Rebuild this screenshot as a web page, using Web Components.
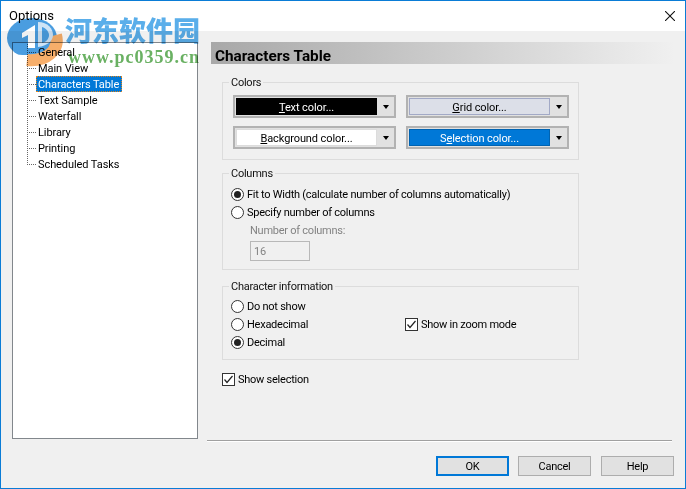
<!DOCTYPE html>
<html>
<head>
<meta charset="utf-8">
<title>Options</title>
<style>
  html, body { margin: 0; padding: 0; background: #f0f0f0; }
  body { width: 686px; height: 489px; overflow: hidden; font: 11px/16px Roboto, "Liberation Sans", sans-serif; letter-spacing: -.25px; color: #000; }
</style>
</head>
<body>
<options-window heading="Options">
  <tree-view slot="tree">
    <tree-item>General</tree-item>
    <tree-item>Main View</tree-item>
    <tree-item selected>Characters Table</tree-item>
    <tree-item>Text Sample</tree-item>
    <tree-item>Waterfall</tree-item>
    <tree-item>Library</tree-item>
    <tree-item>Printing</tree-item>
    <tree-item last>Scheduled Tasks</tree-item>
  </tree-view>

  <page-header slot="page">Characters Table</page-header>

  <group-box slot="page" label="Colors" class="colors" style="--top:12px;--bottom:10px;--gap-top:18px">
    <div style="display:grid;grid-template-columns:163px 163px;gap:8px 10px">
      <color-button bg="#000" fg="#fff" edge="#000"><u>T</u>ext color...</color-button>
      <color-button bg="#dcdfe8" fg="#000" edge="#a2a9c6"><u>G</u>rid color...</color-button>
      <color-button bg="#fff" fg="#000" edge="#dcdcdc"><u>B</u>ackground color...</color-button>
      <color-button bg="#0078d7" fg="#fff" edge="#0063b1">S<u>e</u>lection color...</color-button>
    </div>
  </group-box>

  <group-box slot="page" label="Columns" style="--top:11px;--bottom:8px;--gap-top:13px">
    <radio-option checked>Fit to Width (calculate number of columns automatically)</radio-option>
    <radio-option>Specify number of columns</radio-option>
    <number-field label="Number of columns:" value="16"></number-field>
  </group-box>

  <group-box slot="page" label="Character information" style="--top:10px;--bottom:8px;--gap-top:16px">
    <div style="display:grid;grid-template-columns:174px 1fr">
      <radio-option>Do not show</radio-option><span></span>
      <radio-option>Hexadecimal</radio-option><check-option>Show in zoom mode</check-option>
      <radio-option checked>Decimal</radio-option><span></span>
    </div>
  </group-box>

  <check-option slot="page" style="margin-top:10px">Show selection</check-option>

  <dialog-button slot="actions" default>OK</dialog-button>
  <dialog-button slot="actions">Cancel</dialog-button>
  <dialog-button slot="actions" style="margin-left:1px">Help</dialog-button>
</options-window>
<site-watermark></site-watermark>

<script>
// window frame with title bar, tree column, page column and button row
const windowTemplate = document.createElement('template');
windowTemplate.innerHTML = `
  <style>
    :host {
      display: block;
      box-sizing: border-box;
      width: 686px;
      height: 489px;
      border: 1px solid #0a7cd6;
      background: #f0f0f0;
    }
    .titlebar {
      display: flex;
      align-items: center;
      justify-content: space-between;
      height: 30px;
      padding: 0 10px 0 8px;
      background: #fff;
      font-size: 13px;
      letter-spacing: 0;
    }
    .close { display: block; width: 10px; height: 10px; }
    .main {
      display: grid;
      grid-template-columns: 186px 465px;
      column-gap: 9px;
      padding: 11px 0 0 11px;
    }
    .tree { height: 397px; }
    .page { display: block; height: 396px; }
    .rule {
      grid-column: 2;
      height: 1px;
      background: #a0a0a0;
      box-shadow: 0 1px 0 #fff;
      margin-top: 1px;
    }
    .actions {
      display: flex;
      justify-content: flex-end;
      gap: 9px;
      margin: 15px 11px 0 0;
    }
  </style>
  <div class="titlebar">
    <span class="heading"></span>
    <svg class="close" viewBox="0 0 10 10"><path d="M0 0L10 10M10 0L0 10" stroke="#111" stroke-width="1.1" fill="none"/></svg>
  </div>
  <div class="main">
    <div class="tree"><slot name="tree"></slot></div>
    <div class="page"><slot name="page"></slot></div>
    <div class="rule"></div>
  </div>
  <div class="actions"><slot name="actions"></slot></div>
`;

class OptionsWindow extends HTMLElement {
  constructor() {
    super();
    this.attachShadow({ mode: 'open' });
    this.shadowRoot.appendChild(windowTemplate.content.cloneNode(true));
    this.shadowRoot.querySelector('.heading').textContent = this.getAttribute('heading');
  }
}

// tree
const treeTemplate = document.createElement('template');
treeTemplate.innerHTML = `
  <style>
    :host {
      display: block;
      box-sizing: border-box;
      height: 100%;
      border: 1px solid #82878c;
      background: #fff;
      padding: 1px 0 0 14px;
      letter-spacing: -.08px;
    }
  </style>
  <slot></slot>
`;

class TreeView extends HTMLElement {
  constructor() {
    super();
    this.attachShadow({ mode: 'open' });
    this.shadowRoot.appendChild(treeTemplate.content.cloneNode(true));
  }
}

const treeItemTemplate = document.createElement('template');
treeItemTemplate.innerHTML = `
  <style>
    :host {
      display: flex;
      align-items: center;
      height: 16px;
      padding-left: 9px;
      --dots: repeating-linear-gradient(to bottom, #666 0 1px, transparent 1px 2px);
      --dash: repeating-linear-gradient(to right, #666 0 1px, transparent 1px 2px);
      background:
        var(--dots) 0 0 / 1px 100% no-repeat,
        var(--dash) 0 8px / 9px 1px no-repeat;
      color: #000;
    }
    :host([last]) {
      background:
        var(--dots) 0 0 / 1px 9px no-repeat,
        var(--dash) 0 8px / 9px 1px no-repeat;
    }
    .label {
      box-sizing: border-box;
      height: 16px;
      padding: 0 2px 0 1px;
      border: 1px solid transparent;
      border-left-width: 1px;
      white-space: nowrap;
    }
    :host([selected]) .label {
      background: #0078d7;
      color: #fff;
      border: 1px dotted #e0841a;
    }
  </style>
  <span class="label"><slot></slot></span>
`;

class TreeItem extends HTMLElement {
  constructor() {
    super();
    this.attachShadow({ mode: 'open' });
    this.shadowRoot.appendChild(treeItemTemplate.content.cloneNode(true));
  }
}

// gradient page title
const pageHeaderTemplate = document.createElement('template');
pageHeaderTemplate.innerHTML = `
  <style>
    :host {
      display: block;
      height: 22px;
      margin-left: 4px;
      margin-right: -3px;
      padding-left: 4px;
      background: linear-gradient(to right, #a8a8a8, #f0f0f0);
      font-size: 15.3px;
      font-weight: 700;
      letter-spacing: 0;
      line-height: 28px;
      color: #000;
    }
  </style>
  <slot></slot>
`;

class PageHeader extends HTMLElement {
  constructor() {
    super();
    this.attachShadow({ mode: 'open' });
    this.shadowRoot.appendChild(pageHeaderTemplate.content.cloneNode(true));
  }
}

// group box, the caption sits over the top border
const groupTemplate = document.createElement('template');
groupTemplate.innerHTML = `
  <style>
    :host {
      display: block;
      position: relative;
      box-sizing: border-box;
      width: 357px;
      margin: var(--gap-top, 13px) 0 0 15px;
      border: 1px solid #dcdcdc;
      padding: var(--top, 11px) 8px var(--bottom, 8px) 8px;
    }
    :host(.colors) { padding-left: 10px; padding-right: 0; }
    .caption {
      position: absolute;
      top: -8px;
      left: 6px;
      padding: 0 2px;
      background: #f0f0f0;
      color: #111;
    }
  </style>
  <span class="caption"></span>
  <slot></slot>
`;

class GroupBox extends HTMLElement {
  constructor() {
    super();
    this.attachShadow({ mode: 'open' });
    this.shadowRoot.appendChild(groupTemplate.content.cloneNode(true));
    this.shadowRoot.querySelector('.caption').textContent = this.getAttribute('label');
  }
}

// colour picker with dropdown arrow
const colorTemplate = document.createElement('template');
colorTemplate.innerHTML = `
  <style>
    :host {
      display: flex;
      align-items: stretch;
      box-sizing: border-box;
      height: 23px;
      border: 2px solid #b2b2b2;
      background: #e1e1e1;
      padding: 1px 0 1px 1px;
      letter-spacing: -.1px;
    }
    .swatch {
      flex: 0 0 141px;
      box-sizing: border-box;
      display: flex;
      align-items: center;
      justify-content: center;
      border: 1px solid;
      padding-top: 2px;
    }
    .arrow { flex: 1; display: flex; align-items: center; justify-content: center; }
    .arrow i { border: 3.5px solid transparent; border-top: 4px solid #000; border-bottom: 0; }
  </style>
  <span class="swatch"><span><slot></slot></span></span>
  <span class="arrow"><i></i></span>
`;

class ColorButton extends HTMLElement {
  constructor() {
    super();
    this.attachShadow({ mode: 'open' });
    this.shadowRoot.appendChild(colorTemplate.content.cloneNode(true));
    const swatch = this.shadowRoot.querySelector('.swatch');
    swatch.style.background = this.getAttribute('bg');
    swatch.style.color = this.getAttribute('fg');
    swatch.style.borderColor = this.getAttribute('edge');
  }
}

// radio
const radioTemplate = document.createElement('template');
radioTemplate.innerHTML = `
  <style>
    :host { display: flex; align-items: center; height: 18px; gap: 3px; white-space: nowrap; }
    .dot {
      box-sizing: border-box;
      width: 13px;
      height: 13px;
      flex: none;
      border: 1px solid #333;
      border-radius: 50%;
      background: #fff;
      display: flex;
      align-items: center;
      justify-content: center;
    }
    :host([checked]) .dot::after {
      content: "";
      width: 7px;
      height: 7px;
      border-radius: 50%;
      background: #222;
    }
    .text { padding-top: 2px; }
  </style>
  <span class="dot"></span>
  <span class="text"><slot></slot></span>
`;

class RadioOption extends HTMLElement {
  constructor() {
    super();
    this.attachShadow({ mode: 'open' });
    this.shadowRoot.appendChild(radioTemplate.content.cloneNode(true));
  }
}

// checkbox, always ticked here
const checkTemplate = document.createElement('template');
checkTemplate.innerHTML = `
  <style>
    :host { display: flex; align-items: center; height: 18px; gap: 3px; margin-left: 0; white-space: nowrap; }
    :host([slot="page"]) { margin-left: 15px; }
    svg { width: 13px; height: 13px; flex: none; display: block; }
    .text { padding-top: 2px; }
  </style>
  <svg viewBox="0 0 13 13">
    <rect x=".5" y=".5" width="12" height="12" fill="#fff" stroke="#333"/>
    <path d="M2.5 6.5L5 9.5L10.5 3" fill="none" stroke="#222" stroke-width="1.2"/>
  </svg>
  <span class="text"><slot></slot></span>
`;

class CheckOption extends HTMLElement {
  constructor() {
    super();
    this.attachShadow({ mode: 'open' });
    this.shadowRoot.appendChild(checkTemplate.content.cloneNode(true));
  }
}

// disabled number input
const numberTemplate = document.createElement('template');
numberTemplate.innerHTML = `
  <style>
    :host { display: block; padding-left: 19px; color: #838383; }
    .label { display: block; height: 18px; line-height: 20px; }
    .box {
      display: block;
      box-sizing: border-box;
      width: 60px;
      height: 20px;
      margin-top: 2px;
      border: 1px solid #b8b8b8;
      padding: 1px 0 0 3px;
      line-height: 18px;
    }
  </style>
  <span class="label"></span>
  <span class="box"></span>
`;

class NumberField extends HTMLElement {
  constructor() {
    super();
    this.attachShadow({ mode: 'open' });
    this.shadowRoot.appendChild(numberTemplate.content.cloneNode(true));
    this.shadowRoot.querySelector('.label').textContent = this.getAttribute('label');
    this.shadowRoot.querySelector('.box').textContent = this.getAttribute('value');
  }
}

// OK / Cancel / Help
const buttonTemplate = document.createElement('template');
buttonTemplate.innerHTML = `
  <style>
    :host {
      display: flex;
      align-items: center;
      justify-content: center;
      box-sizing: border-box;
      width: 73px;
      height: 20px;
      padding-top: 2px;
      border: 1px solid #adadad;
      background: #e1e1e1;
      color: #000;
    }
    :host([default]) { border: 2px solid #0078d7; }
  </style>
  <slot></slot>
`;

class DialogButton extends HTMLElement {
  constructor() {
    super();
    this.attachShadow({ mode: 'open' });
    this.shadowRoot.appendChild(buttonTemplate.content.cloneNode(true));
  }
}

// site stamp over the top left corner of the screenshot
const watermarkTemplate = document.createElement('template');
watermarkTemplate.innerHTML = `
  <style>
    :host { position: absolute; left: 0; top: 0; width: 210px; height: 72px; pointer-events: none; mix-blend-mode: multiply; letter-spacing: 0; }
    svg { position: absolute; left: 0; top: 10px; width: 70px; height: 60px; }
    .cn {
      position: absolute;
      left: 65px;
      top: 12px;
      font: 900 27px/36px "Noto Sans CJK SC", sans-serif;
      color: #5aaeea;
      white-space: nowrap;
    }
    .url {
      position: absolute;
      left: 68px;
      top: 47px;
      font: 700 18px/20px "Liberation Serif", serif;
      letter-spacing: 1px;
      color: #6ab163;
      white-space: nowrap;
    }
  </style>
  <svg viewBox="0 0 70 60">
    <ellipse cx="32" cy="28" rx="25" ry="20" fill="#4a9de0"/>
    <path d="M14 44C24 46 40 46 50 38L50 52L14 52Z" fill="#fff"/>
    <path d="M56 25C60 40 46 52 27 50" fill="none" stroke="#f7ae6a" stroke-width="12"/>
    <path d="M22 23L35 15V38H28V25L22 28Z" fill="#fff"/>
    <path d="M38 12C48 12 53 19 53 25C53 31 47 36 38 37Z" fill="#cfe4f6"/>
    <path d="M42 17C46 18 49 22 49 25C49 29 46 32 42 33Z" fill="#4a9de0"/>
  </svg>
  <span class="cn">河东软件园</span>
  <span class="url">www.pc0359.cn</span>
`;

class SiteWatermark extends HTMLElement {
  constructor() {
    super();
    this.attachShadow({ mode: 'open' });
    this.shadowRoot.appendChild(watermarkTemplate.content.cloneNode(true));
  }
}

window.customElements.define('options-window', OptionsWindow);
window.customElements.define('tree-view', TreeView);
window.customElements.define('tree-item', TreeItem);
window.customElements.define('page-header', PageHeader);
window.customElements.define('group-box', GroupBox);
window.customElements.define('color-button', ColorButton);
window.customElements.define('radio-option', RadioOption);
window.customElements.define('check-option', CheckOption);
window.customElements.define('number-field', NumberField);
window.customElements.define('dialog-button', DialogButton);
window.customElements.define('site-watermark', SiteWatermark);
</script>
</body>
</html>
